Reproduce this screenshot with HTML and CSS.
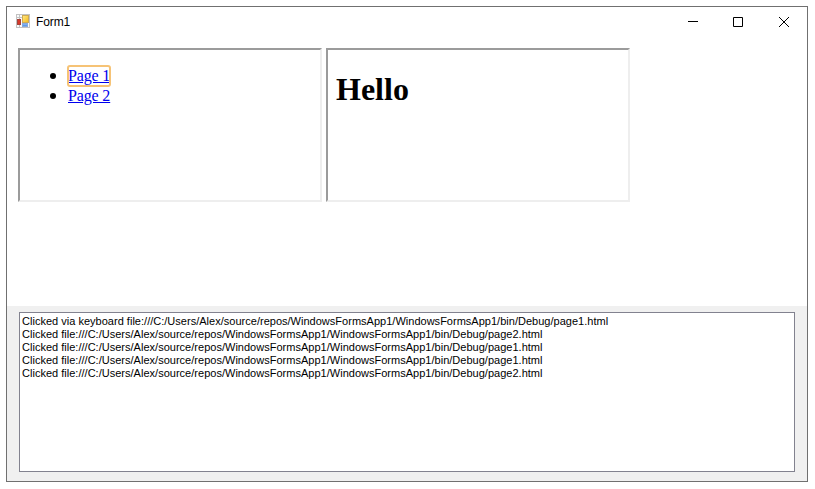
FILE: index.html
```html
<!DOCTYPE html>
<html lang="en">
<head>
<meta charset="utf-8">
<title>Form1</title>
<link rel="stylesheet" href="styles.css">
</head>
<body>
<div class="window">
  <header class="titlebar">
    <svg class="app-icon" width="14" height="14" viewBox="0 0 14 14" shape-rendering="crispEdges">
      <defs>
        <linearGradient id="gold" x1="0" y1="0" x2="1" y2="1">
          <stop offset="0" stop-color="#ffe680"/>
          <stop offset="1" stop-color="#f5bd20"/>
        </linearGradient>
        <linearGradient id="blue" x1="0" y1="0" x2="0" y2="1">
          <stop offset="0" stop-color="#8fbcf2"/>
          <stop offset="1" stop-color="#4f8fe6"/>
        </linearGradient>
      </defs>
      <rect x="0" y="0" width="14" height="14" fill="#c2c2c2"/>
      <rect x="1" y="1" width="12" height="12" fill="#fafafa"/>
      <rect x="0" y="3" width="6" height="1" fill="#c2c2c2"/>
      <rect x="3" y="0" width="1" height="5" fill="#c2c2c2"/>
      <rect x="3" y="11" width="1" height="3" fill="#c2c2c2"/>
      <rect x="6" y="1" width="7" height="8" fill="#cdaa55"/>
      <rect x="7" y="2" width="5" height="6" fill="url(#gold)"/>
      <rect x="1" y="5" width="4" height="6" fill="#a5443a"/>
      <rect x="2" y="6" width="2" height="4" fill="#d8382a"/>
      <rect x="6" y="9" width="6" height="4" fill="#86a8dc"/>
      <rect x="7" y="10" width="4" height="2" fill="url(#blue)"/>
    </svg>
    <span class="title">Form1</span>
    <div class="controls">
      <svg class="ctl" width="10" height="10" viewBox="0 0 10 10"><path d="M0 4.5H10" stroke="#000" fill="none"/></svg>
      <svg class="ctl" width="10" height="10" viewBox="0 0 10 10"><path d="M0.5 0.5H9.5V9.5H0.5Z" stroke="#000" fill="none"/></svg>
      <svg class="ctl ctl-close" width="10" height="10" viewBox="0 0 10 10"><path d="M0 0L10 10M10 0L0 10" stroke="#000" stroke-width="1" fill="none"/></svg>
    </div>
  </header>
  <main class="content">
    <section class="frame">
      <ul class="links">
        <li><a class="focused" href="#">Page 1</a></li>
        <li><a href="#">Page 2</a></li>
      </ul>
    </section>
    <section class="frame">
      <h1 class="hello">Hello</h1>
    </section>
  </main>
  <footer class="log-panel">
    <div class="log">
      <div>Clicked via keyboard file:///C:/Users/Alex/source/repos/WindowsFormsApp1/WindowsFormsApp1/bin/Debug/page1.html</div>
      <div>Clicked file:///C:/Users/Alex/source/repos/WindowsFormsApp1/WindowsFormsApp1/bin/Debug/page2.html</div>
      <div>Clicked file:///C:/Users/Alex/source/repos/WindowsFormsApp1/WindowsFormsApp1/bin/Debug/page1.html</div>
      <div>Clicked file:///C:/Users/Alex/source/repos/WindowsFormsApp1/WindowsFormsApp1/bin/Debug/page1.html</div>
      <div>Clicked file:///C:/Users/Alex/source/repos/WindowsFormsApp1/WindowsFormsApp1/bin/Debug/page2.html</div>
    </div>
  </footer>
</div>
</body>
</html>
```
FILE: styles.css
```css
html, body {
  margin: 0;
  padding: 0;
  background: #fff;
}
body {
  width: 815px;
  height: 489px;
  padding: 6px 7px 7px 6px;
  box-sizing: border-box;
  overflow: hidden;
}
.window {
  width: 802px;
  height: 476px;
  box-sizing: border-box;
  border: 1px solid #707070;
  display: flex;
  flex-direction: column;
  background: #fff;
}
.titlebar {
  height: 41px;
  flex: none;
  display: flex;
  align-items: flex-start;
  padding: 7px 0 0 9px;
  box-sizing: border-box;
  font-family: "Liberation Sans", Arial, sans-serif;
  font-size: 12px;
  color: #000;
}
.app-icon { flex: none; }
.title {
  margin-left: 6px;
  line-height: 16px;
  letter-spacing: -0.1px;
}
.controls {
  margin-left: auto;
  display: flex;
  gap: 35px;
  padding: 3px 18px 0 0;
}
.ctl { display: block; }
.ctl-close { margin-left: 1px; }
.content {
  flex: 1;
  display: flex;
  gap: 4px;
  padding-left: 11px;
  align-items: flex-start;
}
.frame {
  width: 304px;
  height: 154px;
  box-sizing: border-box;
  border: 2px solid;
  border-color: #9b9b9b #eeeeee #eeeeee #9b9b9b;
  background: #fff;
  font-family: "Liberation Serif", "Times New Roman", serif;
  font-size: 16px;
  color: #000;
}
.links {
  margin: 16px 0 0;
  padding: 0 0 0 30px;
  line-height: 20px;
  list-style: none;
}
.links li {
  display: flex;
  align-items: center;
}
.links li::before {
  content: "";
  flex: none;
  width: 6px;
  height: 6px;
  margin-right: 12px;
  border-radius: 50%;
  background: #000;
}
.links a {
  color: #0000ee;
  letter-spacing: -0.15px;
}
.focused {
  outline: 2px solid #f6c376;
  outline-offset: -1px;
  border-radius: 2px;
}
.hello {
  margin: 21px 0 0 8px;
  font-size: 32px;
  line-height: 37px;
  font-weight: bold;
}
.log-panel {
  height: 175px;
  flex: none;
  background: #f0f0f0;
  padding: 6px 12px 9px 12px;
  box-sizing: border-box;
}
.log {
  height: 160px;
  width: 776px;
  box-sizing: border-box;
  border: 1px solid #82828f;
  background: #fff;
  padding: 2px 0 0 2px;
  font-family: "Liberation Sans", Arial, sans-serif;
  font-size: 11px;
  line-height: 13px;
  letter-spacing: 0.015px;
  color: #000;
  white-space: nowrap;
  overflow: hidden;
}
```
